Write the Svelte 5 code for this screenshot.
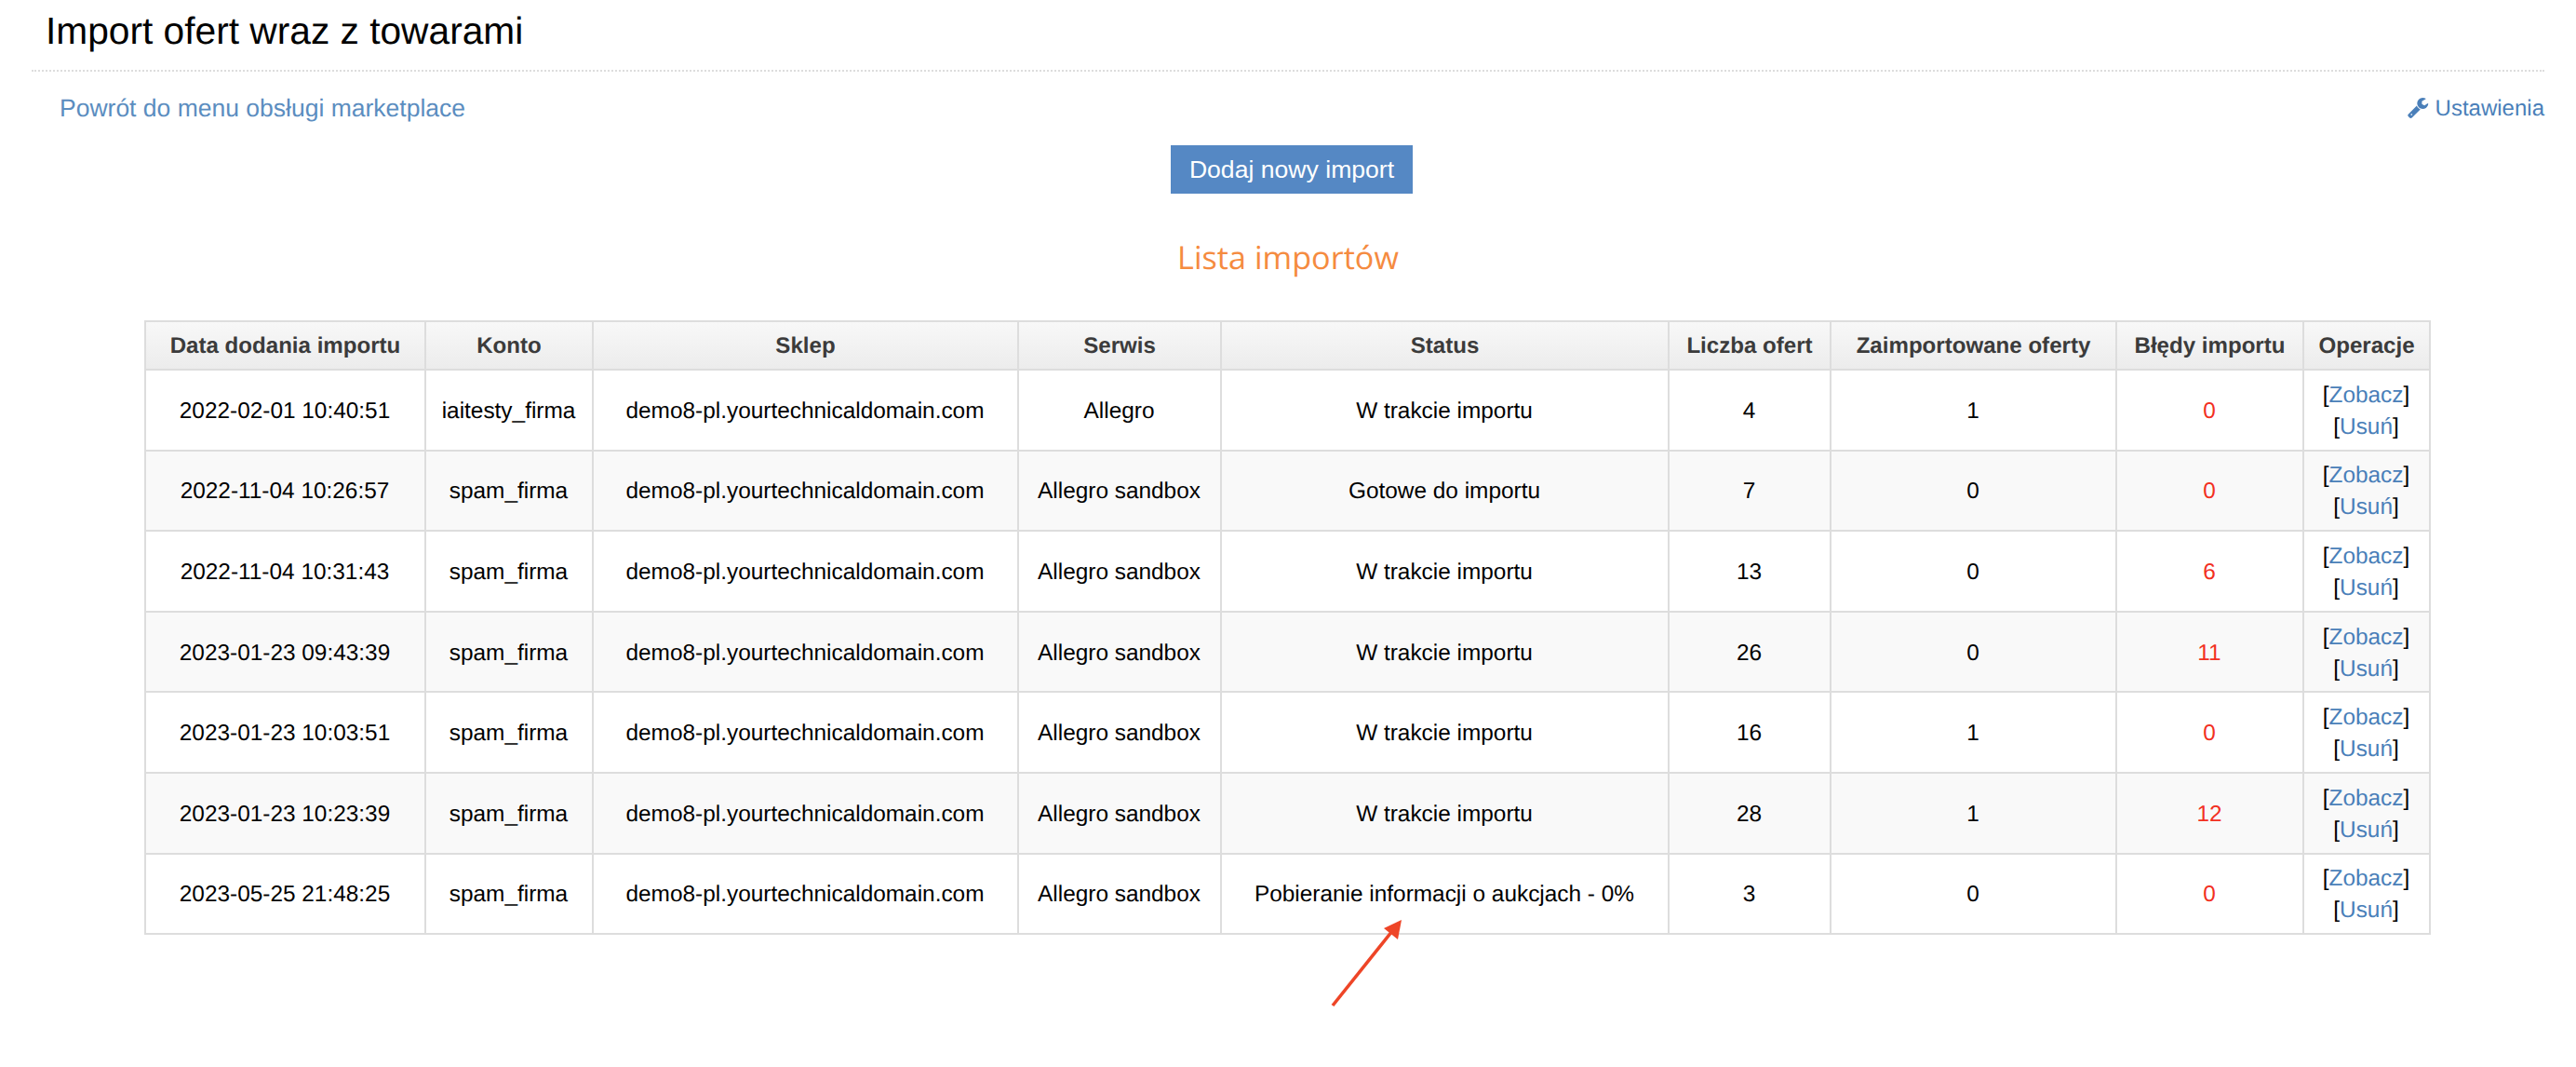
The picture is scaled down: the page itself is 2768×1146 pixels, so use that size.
<script>
	const rows = [
		['2022-02-01 10:40:51', 'iaitesty_firma', 'Allegro', 'W trakcie importu', 4, 1, 0],
		['2022-11-04 10:26:57', 'spam_firma', 'Allegro sandbox', 'Gotowe do importu', 7, 0, 0],
		['2022-11-04 10:31:43', 'spam_firma', 'Allegro sandbox', 'W trakcie importu', 13, 0, 6],
		['2023-01-23 09:43:39', 'spam_firma', 'Allegro sandbox', 'W trakcie importu', 26, 0, 11],
		['2023-01-23 10:03:51', 'spam_firma', 'Allegro sandbox', 'W trakcie importu', 16, 1, 0],
		['2023-01-23 10:23:39', 'spam_firma', 'Allegro sandbox', 'W trakcie importu', 28, 1, 12],
		['2023-05-25 21:48:25', 'spam_firma', 'Allegro sandbox', 'Pobieranie informacji o aukcjach - 0%', 3, 0, 0]
	];
	const widths = [301, 180, 457, 218, 481, 174, 307, 201, 136];
	const heads = ['Data dodania importu', 'Konto', 'Sklep', 'Serwis', 'Status', 'Liczba ofert', 'Zaimportowane oferty', 'Błędy importu', 'Operacje'];
</script>

<div class="page">
	<h1>Import ofert wraz z towarami</h1>
	<div class="nav">
		<a href="#back">Powrót do menu obsługi marketplace</a>
		<a href="#settings" class="settings">
			<svg viewBox="0 0 1792 1792" width="24" height="24" aria-hidden="true">
				<path fill="currentColor" d="M384 1344q0-26-19-45t-45-19-45 19-19 45 19 45 45 19 45-19 19-45zm644-420l-682 682q-37 37-90 37-52 0-91-37l-106-108q-38-36-38-90 0-53 38-91l681-681q39 98 114.5 173.5t173.5 114.5zm634-435q0 39-23 106-47 134-164.5 217.5t-258.5 83.5q-185 0-316.5-131.5t-131.5-316.5 131.5-316.5 316.5-131.5q58 0 121.5 16.5t107.5 46.5q16 11 16 28t-16 28l-293 169v224l193 107q5-3 79-48.5t135.5-81 70.5-35.5q15 0 23.5 10t8.5 25z"/>
			</svg>
			Ustawienia
		</a>
	</div>
	<div class="actions"><button>Dodaj nowy import</button></div>
	<h2>Lista importów</h2>

	<table>
		<colgroup>
			{#each widths as w}
				<col style="width: {w}px" />
			{/each}
		</colgroup>
		<thead>
			<tr>
				{#each heads as h}
					<th>{h}</th>
				{/each}
			</tr>
		</thead>
		<tbody>
			{#each rows as r}
				<tr>
					<td>{r[0]}</td>
					<td>{r[1]}</td>
					<td>demo8-pl.yourtechnicaldomain.com</td>
					<td>{r[2]}</td>
					<td>{r[3]}</td>
					<td>{r[4]}</td>
					<td>{r[5]}</td>
					<td class="errors">{r[6]}</td>
					<td class="ops">
						<span>[<a href="#view">Zobacz</a>]</span>
						<span>[<a href="#delete">Usuń</a>]</span>
					</td>
				</tr>
			{/each}
		</tbody>
	</table>

	<svg class="arrow" width="100" height="110" viewBox="0 0 100 110" aria-hidden="true">
		<line x1="12" y1="100" x2="76" y2="20" stroke="#ee4527" stroke-width="3.6" />
		<polygon points="86,8 67,17 82,29" fill="#ee4527" />
	</svg>
</div>

<style>
	:global(body) {
		margin: 0;
		background: #fff;
	}

	.page {
		position: relative;
		height: 1146px;
		overflow: hidden;
		font-family: 'Liberation Sans', Arial, sans-serif;
		font-size: 24.4px;
		text-rendering: geometricPrecision;
		color: #000;
	}

	h1 {
		margin: 0 34px;
		padding: 7px 0 15px 15px;
		font-size: 40.7px;
		font-weight: 400;
		line-height: 53px;
		border-bottom: 2px dotted #ddd;
	}

	.nav {
		display: flex;
		justify-content: space-between;
		align-items: flex-start;
		margin: 23px 34px 0 64px;
		font-size: 26.5px;
		line-height: 32px;
	}

	.nav a {
		color: #5b8dc0;
		text-decoration: none;
	}

	.nav .settings {
		display: flex;
		align-items: center;
		gap: 6px;
		margin-top: 1px;
		font-size: 24px;
		color: #4a7fb9;
	}

	.actions {
		display: flex;
		justify-content: center;
		margin-top: 23px;
		padding-left: 8px;
	}

	button {
		width: 260px;
		height: 52px;
		padding: 0;
		border: 0;
		background: #5588c4;
		color: #fff;
		font-family: inherit;
		font-size: 26.6px;
	}

	h2 {
		margin: 46px 0 0;
		text-align: center;
		font-family: 'Open Sans', sans-serif;
		font-size: 34.2px;
		font-weight: 400;
		line-height: 46px;
		color: #f58b3f;
	}

	table {
		width: 2457px;
		margin: 44px 0 0 155px;
		table-layout: fixed;
		border-collapse: collapse;
		border: 2px solid #ddd;
	}

	th,
	td {
		border: 2px solid #ddd;
		text-align: center;
		vertical-align: middle;
	}

	th {
		height: 48px;
		padding: 2px 6px 0;
		font-size: 24.1px;
		color: #3b3b3b;
		font-weight: 700;
		background: linear-gradient(#f8f8f8, #ececec);
	}

	td {
		height: 81.6px;
		padding: 3px 6px 0 5px;
		line-height: 34px;
	}

	tbody tr:nth-child(even) td {
		background: #f9f9f9;
	}

	.errors {
		color: #f2301f;
	}

	.ops span {
		display: block;
	}

	.ops a {
		color: #4a7fb9;
		text-decoration: none;
	}

	.arrow {
		position: absolute;
		left: 1420px;
		top: 980px;
	}
</style>
